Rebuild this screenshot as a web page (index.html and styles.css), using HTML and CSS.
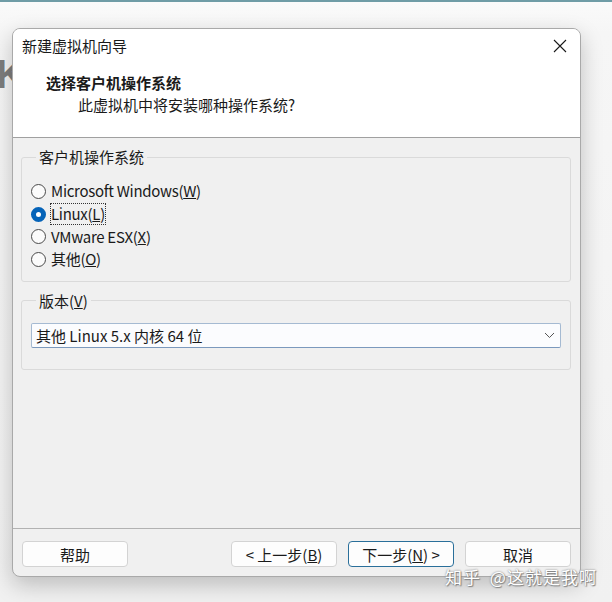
FILE: index.html
```html
<!DOCTYPE html>
<html lang="zh-CN">
<head>
    <meta charset="UTF-8">
    <meta name="viewport" content="width=device-width, initial-scale=1.0">
    <title>新建虚拟机向导</title>
    <link rel="stylesheet" href="styles.css">
</head>
<body>
    <div class="escritorio">
        <span class="fondo__letra">K</span>

        <div class="ventana">
            <header class="ventana__cabecera">
                <div class="ventana__titulo">
                    <span>新建虚拟机向导</span>
                    <svg class="ventana__cerrar" width="14" height="14" viewBox="0 0 14 14">
                        <path d="M1 1 L13 13 M13 1 L1 13" stroke="#1a1a1a" stroke-width="1.1" fill="none"/>
                    </svg>
                </div>
                <h1 class="ventana__paso">选择客户机操作系统</h1>
                <p class="ventana__pregunta">此虚拟机中将安装哪种操作系统?</p>
            </header>

            <main class="ventana__contenido">
                <fieldset class="grupo grupo--sistema">
                    <legend class="grupo__titulo">客户机操作系统</legend>
                    <label class="opcion">
                        <span class="opcion__circulo"></span>
                        <span class="opcion__texto">Microsoft Windows(<u>W</u>)</span>
                    </label>
                    <label class="opcion opcion--activa">
                        <span class="opcion__circulo"></span>
                        <span class="opcion__texto opcion__texto--foco">Linux(<u>L</u>)</span>
                    </label>
                    <label class="opcion">
                        <span class="opcion__circulo"></span>
                        <span class="opcion__texto">VMware ESX(<u>X</u>)</span>
                    </label>
                    <label class="opcion">
                        <span class="opcion__circulo"></span>
                        <span class="opcion__texto">其他(<u>O</u>)</span>
                    </label>
                </fieldset>

                <fieldset class="grupo grupo--version">
                    <legend class="grupo__titulo">版本(<u>V</u>)</legend>
                    <div class="selector">
                        <span>其他 Linux 5.x 内核 64 位</span>
                        <svg width="11" height="7" viewBox="0 0 11 7">
                            <path d="M1 1 L5.5 5.5 L10 1" stroke="#555" stroke-width="1" fill="none"/>
                        </svg>
                    </div>
                </fieldset>
            </main>

            <footer class="ventana__pie">
                <button class="boton">帮助</button>
                <div class="ventana__pie__navegacion">
                    <button class="boton">&lt; 上一步(<u>B</u>)</button>
                    <button class="boton boton--principal">下一步(<u>N</u>) &gt;</button>
                    <button class="boton">取消</button>
                </div>
            </footer>
        </div>

        <span class="marca">知乎 @这就是我啊</span>
    </div>
</body>
</html>
```

FILE: styles.css
```css
body {
    margin: 0;
    padding: 0;
    font-family: "Noto Sans CJK SC", "Noto Sans", sans-serif;
    font-size: 15px;
    color: #1a1a1a;
}
.escritorio {
    position: relative;
    width: 612px;
    height: 602px;
    overflow: hidden;
    box-sizing: border-box;
    border-top: 2px solid #6f9ca6;
    background: linear-gradient(#fafafa 0, #f6f6f6 30px, #f1f1f1 100%);
    padding: 26px 0 0 12px;
}
.fondo__letra {
    position: absolute;
    left: -4px;
    top: 50px;
    font-family: "Liberation Sans", sans-serif;
    font-weight: bold;
    font-size: 40px;
    color: #7d7d7d;
}
.ventana {
    position: relative;
    width: 569px;
    height: 549px;
    box-sizing: border-box;
    border: 1px solid #a9a9a9;
    border-radius: 8px;
    overflow: hidden;
    display: flex;
    flex-direction: column;
    background-color: #f0f0f0;
    box-shadow: 0 8px 22px rgba(0, 0, 0, 0.22);
}
.ventana__cabecera {
    height: 109px;
    box-sizing: border-box;
    background-color: #ffffff;
    border-bottom: 1px solid #a0a0a0;
    padding-top: 7px;
}
.ventana__titulo {
    display: flex;
    justify-content: space-between;
    align-items: center;
    height: 20px;
    line-height: 20px;
    padding: 0 13px 0 9px;
}
.ventana__paso {
    margin: 17px 0 0 33px;
    font-size: 15px;
    font-weight: bold;
    line-height: 20px;
}
.ventana__pregunta {
    margin: 2px 0 0 65px;
    line-height: 20px;
}
.ventana__contenido {
    flex-grow: 1;
    padding: 9px 9px 0 8px;
}
.grupo {
    margin: 0;
    padding: 0 9px;
    border: 1px solid #dadada;
    border-radius: 3px;
}
.grupo__titulo {
    margin-left: 5px;
    padding: 0 3px;
    line-height: 20px;
}
.grupo--sistema {
    padding-top: 13px;
    padding-bottom: 10px;
}
.grupo--version {
    margin-top: 9px;
    padding-top: 12px;
    padding-bottom: 21px;
}
.opcion {
    display: flex;
    align-items: center;
    height: 22.7px;
}
.opcion__circulo {
    width: 15px;
    height: 15px;
    box-sizing: border-box;
    border: 1px solid #4a4a4a;
    border-radius: 50%;
    background-color: #fbfbfb;
    margin-right: 4px;
}
.opcion--activa .opcion__circulo {
    border: 5px solid #0563b8;
    background-color: #ffffff;
}
.opcion__texto {
    line-height: 20px;
    letter-spacing: -0.3px;
    border: 1px solid transparent;
}
.opcion__texto--foco {
    border: 1px dotted #333;
}
.selector {
    display: flex;
    justify-content: space-between;
    align-items: center;
    height: 25px;
    box-sizing: border-box;
    padding: 0 5px 0 4px;
    background-color: #fbfcfe;
    border: 1px solid #a5bad2;
    border-bottom-color: #7b99bd;
    border-radius: 2px;
}
.ventana__pie {
    height: 48px;
    box-sizing: border-box;
    border-top: 1px solid #b2b2b2;
    padding: 12px 9px 0 9px;
    display: flex;
    justify-content: space-between;
    align-items: flex-start;
}
.ventana__pie__navegacion {
    display: flex;
    gap: 11px;
}
.boton {
    width: 106px;
    height: 26px;
    padding: 0;
    font-family: inherit;
    font-size: 15px;
    color: #1a1a1a;
    background-color: #fdfdfd;
    border: 1px solid #d3d3d3;
    border-radius: 4px;
}
.boton--principal {
    border-color: #2a6f9a;
}
.marca {
    position: absolute;
    left: 445px;
    top: 562px;
    font-size: 17px;
    letter-spacing: 1px;
    word-spacing: 4px;
    color: #ffffff;
    text-shadow: 0 0 2px #6b6b6b, 1px 1px 1px #8a8a8a;
}
```
